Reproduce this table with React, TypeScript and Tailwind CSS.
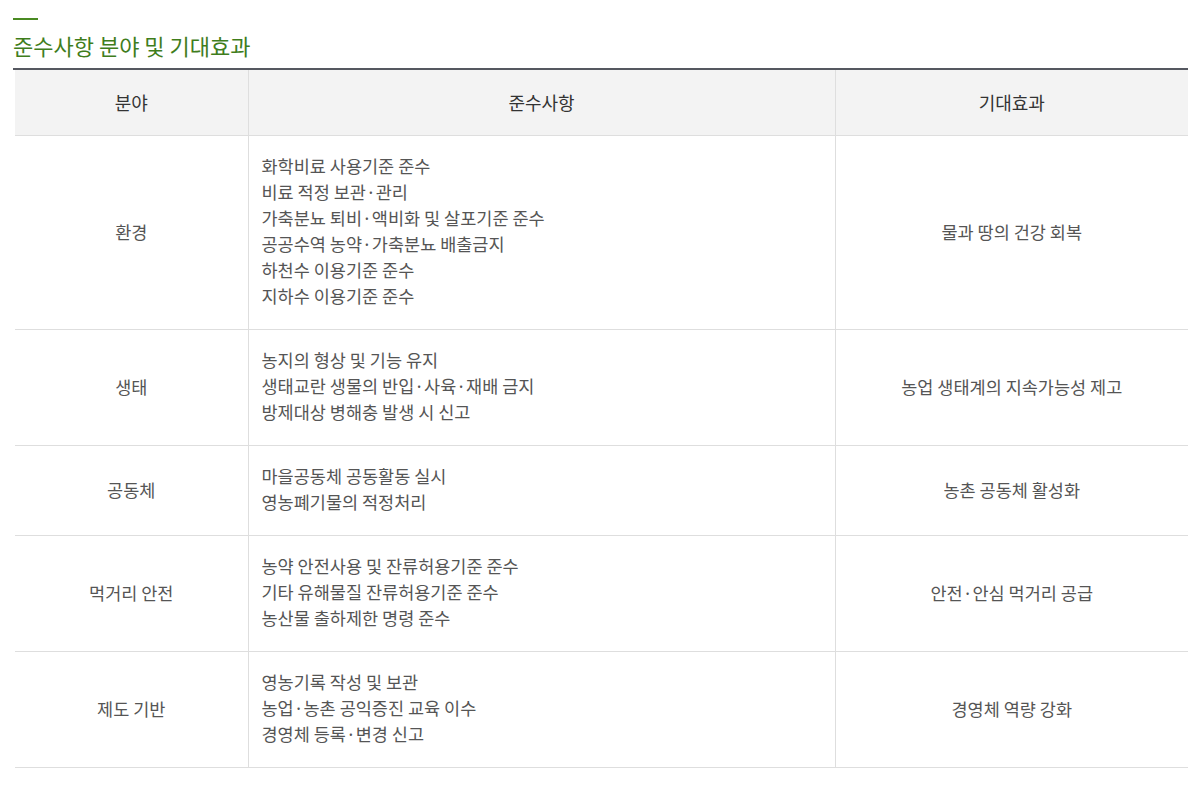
import React from 'react';

interface Row {
  field: string;
  items: string[];
  effect: string;
}

const rows: Row[] = [
  {
    field: '환경',
    items: [
      '화학비료 사용기준 준수',
      '비료 적정 보관·관리',
      '가축분뇨 퇴비·액비화 및 살포기준 준수',
      '공공수역 농약·가축분뇨 배출금지',
      '하천수 이용기준 준수',
      '지하수 이용기준 준수',
    ],
    effect: '물과 땅의 건강 회복',
  },
  {
    field: '생태',
    items: ['농지의 형상 및 기능 유지', '생태교란 생물의 반입·사육·재배 금지', '방제대상 병해충 발생 시 신고'],
    effect: '농업 생태계의 지속가능성 제고',
  },
  {
    field: '공동체',
    items: ['마을공동체 공동활동 실시', '영농폐기물의 적정처리'],
    effect: '농촌 공동체 활성화',
  },
  {
    field: '먹거리 안전',
    items: ['농약 안전사용 및 잔류허용기준 준수', '기타 유해물질 잔류허용기준 준수', '농산물 출하제한 명령 준수'],
    effect: '안전·안심 먹거리 공급',
  },
  {
    field: '제도 기반',
    items: ['영농기록 작성 및 보관', '농업·농촌 공익증진 교육 이수', '경영체 등록·변경 신고'],
    effect: '경영체 역량 강화',
  },
];

export default function App() {
  return (
    <div className="min-h-screen bg-white pl-[13px] pr-[8px] pt-[18px] font-['Noto_Sans_CJK_KR','Noto_Sans',sans-serif]">
      {/* Section title */}
      <div className="h-[2px] w-[25px] bg-[#4a8a22]" />
      <h2 className="mt-[13px] text-[22px] leading-[24px] text-[#3f7d1c]">준수사항 분야 및 기대효과</h2>

      <div className="mt-[11px] border-t-2 border-[#555860] pl-[2px]">
        <table className="w-full border-collapse text-[17.5px] leading-[26px]">
          <colgroup>
            <col className="w-[233px]" />
            <col className="w-[587px]" />
            <col />
          </colgroup>
          <thead>
            <tr className="bg-[#f3f3f3] text-[18px] text-[#333]">
              <th className="h-[65px] border-b border-r border-[#dedede] font-normal">분야</th>
              <th className="border-b border-r border-[#dedede] font-normal">준수사항</th>
              <th className="border-b border-[#dedede] font-normal">기대효과</th>
            </tr>
          </thead>
          <tbody className="text-[#555]">
            {rows.map((row) => (
              <tr key={row.field}>
                <td className="border-b border-r border-[#dedede] text-center">{row.field}</td>
                <td className="border-b border-r border-[#dedede] pl-[13px] pt-[17px] pb-[20px]">
                  {row.items.map((item) => (
                    <div key={item}>{item}</div>
                  ))}
                </td>
                <td className="border-b border-[#dedede] text-center">{row.effect}</td>
              </tr>
            ))}
          </tbody>
        </table>
      </div>
    </div>
  );
}
